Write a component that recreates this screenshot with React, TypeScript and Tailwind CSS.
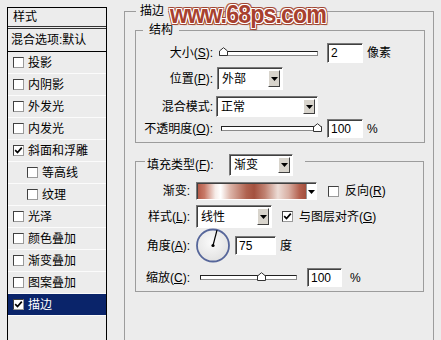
import clsx from "clsx";

const FONT = "font-['Liberation_Sans','Noto_Sans_CJK_SC',sans-serif]";

function Check({ checked }: { checked?: boolean }) {
  return (
    <span className="w-[11px] h-[11px] shrink-0 bg-white border border-[#404040] border-b-[#9a9a9a] border-r-[#9a9a9a] flex items-center justify-center">
      {checked && (
        <svg width="9" height="9" viewBox="0 0 9 9">
          <path d="M1.2 4.2 L3.5 6.6 L7.8 1.6" stroke="#000" strokeWidth="1.7" fill="none" />
        </svg>
      )}
    </span>
  );
}

function Arrow() {
  return (
    <svg width="7" height="4" viewBox="0 0 7 4">
      <path d="M0 0 H7 L3.5 4 Z" fill="#000" />
    </svg>
  );
}

function Dropdown({ text, className }: { text: string; className: string }) {
  return (
    <div
      className={clsx(
        "flex items-center bg-white border border-[#7a7a7a] border-b-white border-r-white shadow-[inset_1px_1px_0_#404040]",
        className
      )}
    >
      <span className="flex-1 pl-[4px] leading-[14px]">{text}</span>
      <span className="self-stretch my-[2px] mr-[2px] w-[12px] bg-[#d8d4cc] border border-white border-b-[#404040] border-r-[#404040] flex items-center justify-center">
        <Arrow />
      </span>
    </div>
  );
}

function Input({ value, className }: { value: string; className: string }) {
  return (
    <div
      className={clsx(
        "flex items-center bg-white border border-[#7a7a7a] border-b-white border-r-white shadow-[inset_1px_1px_0_#404040] pl-[3px] leading-[14px]",
        className
      )}
    >
      {value}
    </div>
  );
}

function Slider({ className, thumb }: { className: string; thumb: number }) {
  return (
    <div className={clsx("relative h-full flex items-center", className)}>
      <div className="w-full h-[5px] bg-white border border-[#202020] border-b-[#8a8a8a] border-r-[#8a8a8a]" />
      <svg
        width="9"
        height="9"
        viewBox="0 0 9 9"
        className="absolute top-[4px]"
        style={{ left: thumb }}
      >
        <path d="M0.5 8.5 V4 L4.5 0.7 L8.5 4 V8.5 Z" fill="#fff" stroke="#333" />
      </svg>
    </div>
  );
}

const items = [
  { label: "投影" },
  { label: "内阴影" },
  { label: "外发光" },
  { label: "内发光" },
  { label: "斜面和浮雕", checked: true },
  { label: "等高线", indent: true },
  { label: "纹理", indent: true },
  { label: "光泽" },
  { label: "颜色叠加" },
  { label: "渐变叠加" },
  { label: "图案叠加" },
  { label: "描边", checked: true, active: true },
];

export default function App() {
  return (
    <div
      className={clsx(
        "relative w-[441px] h-[340px] overflow-hidden bg-[#ececec] text-[12px] text-black flex",
        FONT
      )}
    >
      {/* style list */}
      <div className="pl-[7px] pt-[7px] shrink-0">
        <div className="w-[100px] h-[340px] border border-black border-b-0 flex flex-col">
          <div className="h-[21px] flex items-center pl-[5px] border-b-[3px] border-double border-[#333]">
            样式
          </div>
          <div className="h-[23px] flex items-center pl-[3px] border-b border-black">
            混合选项:默认
          </div>
          {items.map((it) => (
            <div
              key={it.label}
              className={clsx(
                "h-[22px] flex items-center gap-[4px] border-b border-[#fbfbfb]",
                it.indent ? "pl-[19px]" : "pl-[5px]",
                it.active && "bg-[#0a246a] text-white border-[#0a246a]"
              )}
            >
              <Check checked={it.checked} />
              <span className="leading-[14px]">{it.label}</span>
            </div>
          ))}
        </div>
      </div>

      {/* stroke settings */}
      <fieldset className="ml-[17px] mt-[4px] w-[310px] h-[400px] border border-[#9c9c9c] shrink-0">
        <legend className="ml-[11px] px-[4px] leading-[14px]">描边</legend>

        <fieldset className="ml-[10px] mt-[5px] w-[290px] border border-[#9c9c9c] pb-[4px]">
          <legend className="ml-[7px] px-[6px] leading-[14px]">结构</legend>
          <div className="pt-[6px]">
            <div className="h-[20px] flex items-center">
              <span className="w-[77px] text-right">
                大小(<u>S</u>):
              </span>
              <Slider className="ml-[6px] w-[99px]" thumb={0} />
              <Input value="2" className="ml-[9px] w-[36px] h-[20px]" />
              <span className="ml-[4px]">像素</span>
            </div>
            <div className="mt-[4px] h-[23px] flex items-center">
              <span className="w-[77px] text-right">
                位置(<u>P</u>):
              </span>
              <Dropdown text="外部" className="ml-[4px] w-[66px] h-[23px]" />
            </div>
            <div className="mt-[6px] h-[21px] flex items-center">
              <span className="w-[77px] text-right">混合模式:</span>
              <Dropdown text="正常" className="ml-[3px] w-[102px] h-[21px]" />
            </div>
            <div className="mt-[2px] h-[19px] flex items-center">
              <span className="w-[77px] text-right">
                不透明度(<u>O</u>):
              </span>
              <Slider className="ml-[8px] w-[101px]" thumb={92} />
              <Input value="100" className="ml-[5px] w-[36px] h-[19px]" />
              <span className="ml-[4px]">%</span>
            </div>
          </div>
        </fieldset>

        <div className="ml-[10px] mt-[18px] w-[289px] border border-[#9c9c9c] pb-[4px]">
          <div className="-mt-[8px] ml-[9px] flex">
            <div className="h-[22px] flex items-center bg-[#ececec] pl-[2px] pr-[12px]">
              <span className="w-[82px]">
                填充类型(<u>F</u>):
              </span>
              <Dropdown text="渐变" className="w-[64px] h-[22px]" />
            </div>
          </div>

          <div className="mt-[6px] h-[18px] flex items-center">
            <span className="w-[54px] text-right">渐变:</span>
            <div className="ml-[6px] w-[121px] h-[18px] flex border border-[#7a7a7a] border-b-white border-r-white shadow-[inset_1px_1px_0_#404040] pl-[1px] pt-[1px]">
              <div className="flex-1 bg-[linear-gradient(90deg,#b45a48_0%,#c87a68_6%,#f6ece8_16%,#ffffff_21%,#dcb4a8_30%,#b0624f_45%,#a4513f_52%,#c08272_62%,#ecdcd6_74%,#d8aea2_84%,#b4614f_94%,#a44f3d_100%)]" />
              <span className="w-[10px] bg-white border-l border-[#9a9a9a] flex items-center justify-center">
                <Arrow />
              </span>
            </div>
            <span className="ml-[11px]">
              <Check />
            </span>
            <span className="ml-[6px]">
              反向(<u>R</u>)
            </span>
          </div>

          <div className="mt-[5px] h-[23px] flex items-center">
            <span className="w-[54px] text-right">
              样式(<u>L</u>):
            </span>
            <Dropdown text="线性" className="ml-[6px] w-[76px] h-[23px]" />
            <span className="ml-[10px]">
              <Check checked />
            </span>
            <span className="ml-[6px]">
              与图层对齐(<u>G</u>)
            </span>
          </div>

          <div className="h-[35px] flex items-center">
            <span className="w-[54px] text-right">
              角度(<u>A</u>):
            </span>
            <svg width="36" height="35" viewBox="0 0 36 35" className="ml-[5px]">
              <defs>
                <radialGradient id="dialFill" cx="0.45" cy="0.4" r="0.6">
                  <stop offset="0" stopColor="#fafafa" />
                  <stop offset="1" stopColor="#e2e2e2" />
                </radialGradient>
              </defs>
              <circle cx="18" cy="17.5" r="16" fill="url(#dialFill)" stroke="#56669a" strokeWidth="1.8" />
              <line x1="18" y1="17.5" x2="22" y2="2.2" stroke="#000" strokeWidth="1.2" />
              <circle cx="18" cy="17.5" r="1.6" fill="#000" />
            </svg>
            <Input value="75" className="ml-[4px] w-[41px] h-[19px]" />
            <span className="ml-[4px]">度</span>
          </div>

          <div className="mt-[5px] h-[19px] flex items-center">
            <span className="w-[54px] text-right">
              缩放(<u>C</u>):
            </span>
            <Slider className="ml-[10px] w-[97px]" thumb={57} />
            <Input value="100" className="ml-[10px] w-[35px] h-[19px]" />
            <span className="ml-[8px]">%</span>
          </div>
        </div>
      </fieldset>

      {/* watermark */}
      <div className="absolute left-[170px] top-[2px] leading-[25px] origin-left scale-x-[0.93] text-[25px] font-bold tracking-[-1px] text-[#a8412f] font-['Liberation_Sans',sans-serif] [text-shadow:1px_0_0_#fff,-1px_0_0_#fff,0_1px_0_#fff,0_-1px_0_#fff,1px_1px_0_#fff,-1px_-1px_0_#fff,1px_-1px_0_#fff,-1px_1px_0_#fff,2px_0_0_#9e4634,-2px_0_0_#9e4634,0_2px_0_#9e4634,0_-2px_0_#9e4634,2px_2px_1px_#8e3e2e,-2px_-2px_0_#b0604e,2px_-2px_0_#b0604e,-2px_2px_0_#b0604e]">
        www.68ps.com
      </div>
    </div>
  );
}
